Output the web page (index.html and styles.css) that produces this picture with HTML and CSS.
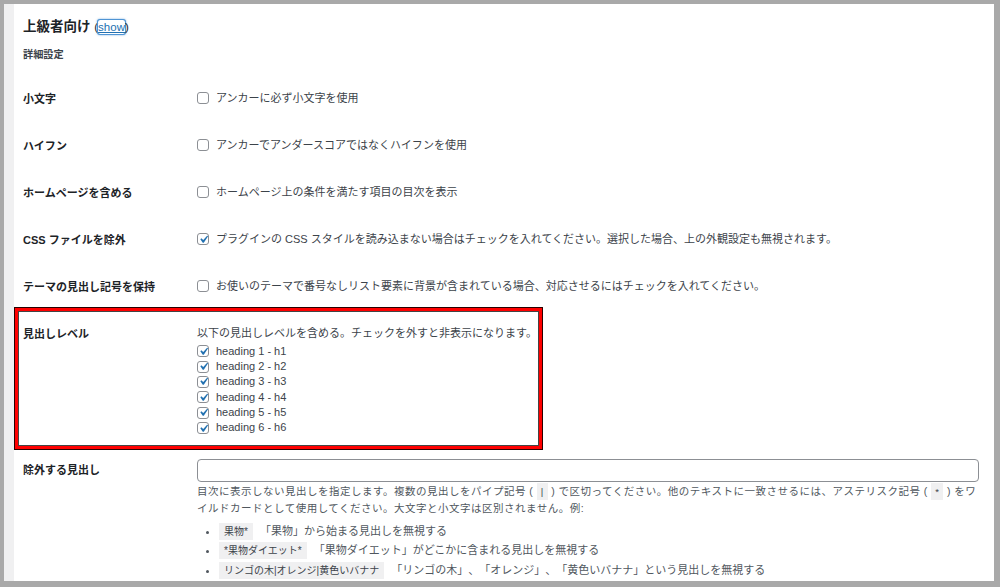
FILE: index.html
```html
<!DOCTYPE html>
<html lang="ja">
<head>
    <meta charset="UTF-8">
    <title>目次設定 - 上級者向け</title>
    <link rel="stylesheet" href="styles.css">
</head>
<body>
    <div class="frame">
        <div class="panel">
            <h3 class="section-title">上級者向け <span class="toggle">(<a href="#" class="focused">show</a>)</span></h3>
            <p class="subhead">詳細設定</p>

            <div class="form-row">
                <div class="label">小文字</div>
                <div class="field">
                    <label class="check"><span class="cb"></span>アンカーに必ず小文字を使用</label>
                </div>
            </div>
            <div class="form-row">
                <div class="label">ハイフン</div>
                <div class="field">
                    <label class="check"><span class="cb"></span>アンカーでアンダースコアではなくハイフンを使用</label>
                </div>
            </div>
            <div class="form-row">
                <div class="label">ホームページを含める</div>
                <div class="field">
                    <label class="check"><span class="cb"></span>ホームページ上の条件を満たす項目の目次を表示</label>
                </div>
            </div>
            <div class="form-row">
                <div class="label">CSS ファイルを除外</div>
                <div class="field">
                    <label class="check"><span class="cb on"><svg viewBox="0 0 20 20"><path d="M14.83 4.89l1.34.94-5.81 8.38H9.02L5.78 9.67l1.34-1.25 2.57 2.4z"/></svg></span>プラグインの CSS スタイルを読み込まない場合はチェックを入れてください。選択した場合、上の外観設定も無視されます。</label>
                </div>
            </div>
            <div class="form-row">
                <div class="label">テーマの見出し記号を保持</div>
                <div class="field">
                    <label class="check"><span class="cb"></span>お使いのテーマで番号なしリスト要素に背景が含まれている場合、対応させるにはチェックを入れてください。</label>
                </div>
            </div>

            <div class="form-row highlight">
                <div class="label">見出しレベル</div>
                <div class="field">
                    <p class="levels-note">以下の見出しレベルを含める。チェックを外すと非表示になります。</p>
                    <label class="check level"><span class="cb on"><svg viewBox="0 0 20 20"><path d="M14.83 4.89l1.34.94-5.81 8.38H9.02L5.78 9.67l1.34-1.25 2.57 2.4z"/></svg></span>heading 1 - h1</label>
                    <label class="check level"><span class="cb on"><svg viewBox="0 0 20 20"><path d="M14.83 4.89l1.34.94-5.81 8.38H9.02L5.78 9.67l1.34-1.25 2.57 2.4z"/></svg></span>heading 2 - h2</label>
                    <label class="check level"><span class="cb on"><svg viewBox="0 0 20 20"><path d="M14.83 4.89l1.34.94-5.81 8.38H9.02L5.78 9.67l1.34-1.25 2.57 2.4z"/></svg></span>heading 3 - h3</label>
                    <label class="check level"><span class="cb on"><svg viewBox="0 0 20 20"><path d="M14.83 4.89l1.34.94-5.81 8.38H9.02L5.78 9.67l1.34-1.25 2.57 2.4z"/></svg></span>heading 4 - h4</label>
                    <label class="check level"><span class="cb on"><svg viewBox="0 0 20 20"><path d="M14.83 4.89l1.34.94-5.81 8.38H9.02L5.78 9.67l1.34-1.25 2.57 2.4z"/></svg></span>heading 5 - h5</label>
                    <label class="check level"><span class="cb on"><svg viewBox="0 0 20 20"><path d="M14.83 4.89l1.34.94-5.81 8.38H9.02L5.78 9.67l1.34-1.25 2.57 2.4z"/></svg></span>heading 6 - h6</label>
                </div>
            </div>

            <div class="form-row exclude">
                <div class="label">除外する見出し</div>
                <div class="field">
                    <input type="text" class="text-input">
                    <p class="description">目次に表示しない見出しを指定します。複数の見出しをパイプ記号 ( <code>|</code> ) で区切ってください。他のテキストに一致させるには、アステリスク記号 ( <code>*</code> ) をワ<br>イルドカードとして使用してください。大文字と小文字は区別されません。例:</p>
                    <ul class="examples">
                        <li><code>果物*</code> 「果物」から始まる見出しを無視する</li>
                        <li><code>*果物ダイエット*</code> 「果物ダイエット」がどこかに含まれる見出しを無視する</li>
                        <li><code>リンゴの木|オレンジ|黄色いバナナ</code> 「リンゴの木」、「オレンジ」、「黄色いバナナ」という見出しを無視する</li>
                    </ul>
                </div>
            </div>
        </div>
    </div>
</body>
</html>
```

FILE: styles.css
```css
html, body {
    margin: 0;
    height: 587px;
    overflow: hidden;
}
body {
    font-family: "Liberation Sans", Arial, "Noto Sans CJK JP", sans-serif;
    font-size: 11px;
    color: #3c434a;
}
.frame {
    height: 587px;
    box-sizing: border-box;
    padding: 4px 6px 6px 4px;
    background: #a9a9a9;
}
.panel {
    height: 100%;
    box-sizing: border-box;
    background: white;
    border-left: 10px solid #f0f0f1;
    padding: 14px 15px 0 9px;
    overflow: hidden;
}
.section-title {
    margin: 0;
    font-size: 13.5px;
    line-height: 18px;
    color: #1d2327;
}
.toggle {
    font-size: 11.5px;
    font-weight: normal;
    color: #1d2327;
}
.toggle a {
    color: #2271b1;
}
.focused {
    box-shadow: 0 0 0 1px #4f94d4, 0 0 2px 1px rgba(79, 148, 212, 0.8);
    border-radius: 2px;
    padding: 1px 0;
}
.subhead {
    margin: 12px 0 13px;
    font-size: 10.2px;
    line-height: 14px;
    font-weight: bold;
    color: #3c434a;
}
.form-row {
    display: flex;
}
.label {
    width: 174px;
    flex: none;
    padding: 17px 0 16px;
    line-height: 14px;
    font-weight: bold;
    color: #1d2327;
}
.field {
    flex: 1;
    min-width: 0;
    padding: 15px 0 16px;
    line-height: 16px;
}
.check {
    display: flex;
    align-items: center;
}
.cb {
    width: 12px;
    height: 12px;
    flex: none;
    box-sizing: border-box;
    border: 1px solid #8c8f94;
    border-radius: 3px;
    margin-right: 7px;
    background: white;
    display: flex;
    align-items: center;
    justify-content: center;
    overflow: visible;
}
.cb svg {
    width: 15px;
    height: 15px;
    flex: none;
    fill: #2271b1;
}
.highlight {
    width: 527px;
    flex: none;
    box-sizing: border-box;
    margin: -2px 0 0 -8px;
    padding-left: 5px;
    border: 3px solid #f00;
    box-shadow: 0 0 0 1px #2a0000, inset 0 0 0 1px #444;
}
.highlight .label {
    padding: 16px 0 0;
}
.highlight .field {
    padding: 14px 0 10px;
}
.levels-note {
    margin: 0 0 2.5px;
    line-height: 16px;
}
.level {
    height: 15.4px;
    line-height: 15.4px;
}
.exclude .label {
    padding-top: 14px;
}
.exclude .field {
    padding-top: 10px;
}
.text-input {
    display: block;
    width: 100%;
    height: 23px;
    box-sizing: border-box;
    margin: 0;
    border: 1px solid #8c8f94;
    border-radius: 4px;
    background: white;
}
.description {
    margin: 1px 0 0;
    font-size: 10.5px;
    line-height: 16px;
    color: #50575e;
    letter-spacing: 0.5px;
}
code {
    font-family: "Liberation Sans", "Noto Sans CJK JP", sans-serif;
    font-size: 9.5px;
    background: #f0f0f1;
    padding: 3px 4px;
    color: #3c434a;
}
.examples {
    margin: 8px 0 0;
    padding-left: 22px;
    color: #50575e;
    text-spacing-trim: space-all;
}
.examples li {
    line-height: 15.5px;
    margin-bottom: 4px;
}
.examples code {
    margin-right: 4px;
    padding: 3px 5px;
    font-size: 10px;
}
```
